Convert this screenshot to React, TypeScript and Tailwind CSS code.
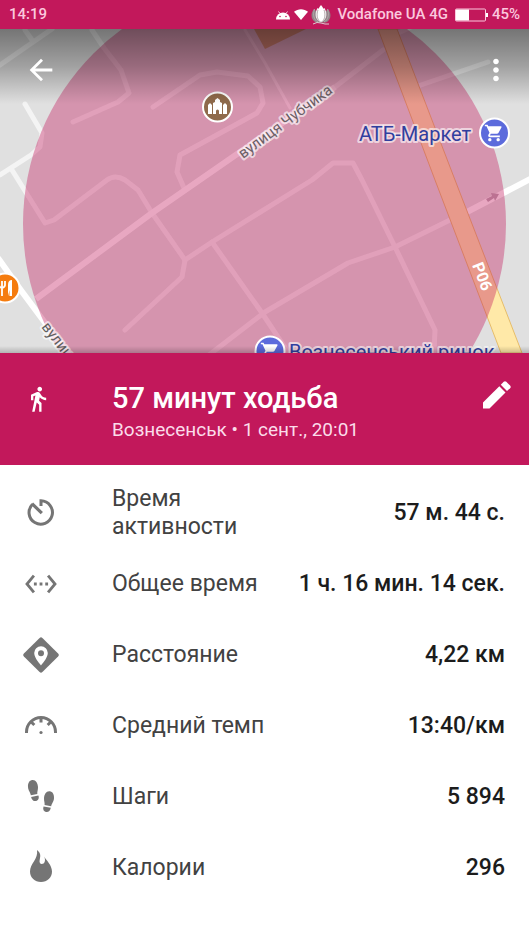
import { ReactNode } from "react";
import {
  MdArrowBack,
  MdDirectionsWalk,
  MdMoreVert,
  MdSettingsEthernet,
  MdShoppingCart,
} from "react-icons/md";

type Stat = {
  icon: ReactNode;
  label: string;
  value: string;
};

function PencilIcon() {
  return (
    <svg viewBox="0 0 28 28" className="size-7" fill="white">
      <path d="M0 27.500V21.500L16.300 5.200l6.200 6.200L6.500 27.500z" />
      <path d="M17.800 3.700L20.700.8q1.300-1.200 2.600 0l3.800 3.800q1.200 1.300 0 2.600L24 10z" />
    </svg>
  );
}

function TimerIcon() {
  return (
    <svg viewBox="0 0 36 36" className="size-9" fill="none" stroke="currentColor" strokeWidth="3">
      <path d="M9.500 9.200A11.700 11.700 0 1 0 18 5.800V11" />
      <path d="M9 8.600L18.800 18.200" strokeWidth="3.200" />
    </svg>
  );
}

function DistanceIcon() {
  return (
    <svg viewBox="0 0 36 36" className="size-9" fill="currentColor">
      <path d="M16.600.9a2 2 0 0 1 2.800 0l15.700 15.700a2 2 0 0 1 0 2.800L19.400 35.100a2 2 0 0 1-2.800 0L.9 19.400a2 2 0 0 1 0-2.800z" />
      <path
        fill="white"
        fillRule="evenodd"
        d="M18 9.300a6.800 6.800 0 0 0-6.800 6.800c0 5.200 6.800 12.300 6.800 12.300s6.800-7.100 6.800-12.300A6.800 6.800 0 0 0 18 9.300zm0 4a3 3 0 1 1 0 6 3 3 0 0 1 0-6z"
      />
    </svg>
  );
}

function PaceIcon() {
  return (
    <svg viewBox="0 0 36 36" className="size-9" fill="none" stroke="currentColor" strokeWidth="3">
      <path d="M3.500 25V24a14.500 14.500 0 0 1 29 0V25" />
      <path d="M18 9V14.500M8 13.700L11.300 17M28 13.700L24.700 17" />
      <circle cx="18" cy="24.500" r="1.600" fill="currentColor" stroke="none" />
    </svg>
  );
}

function StepsIcon() {
  return (
    <svg viewBox="0 0 36 36" className="size-9" fill="currentColor">
      <path d="M9.300 1C12.500.500 14.800 4 15 8c.100 2.800-.900 4.600-.700 7L7.800 16.200C7.600 13.600 5.300 12 5 8 4.800 4 6.300 1.400 9.300 1z" />
      <path d="M8.100 17.900L15.400 16.600c1 2.800-.200 5-2.400 5.400-2.400.400-4.300-1-4.900-4.100z" />
      <path d="M26.700 12.200c-3.200-.5-5.500 3-5.700 7-.1 2.800.9 4.300.6 6.900l6.600 1.200c.2-2.700 2.500-4.100 2.800-8.100.2-4-1.300-6.600-4.300-7z" />
      <path d="M20.500 27.500L27.800 28.800c-.5 3.200-2.500 4.600-4.900 4.200-2.200-.4-3.300-2.700-2.400-5.500z" />
    </svg>
  );
}

function FlameIcon() {
  return (
    <svg viewBox="0 0 36 36" className="size-9" fill="currentColor">
      <path d="M14 0C18 3 17.500 6 16.800 9.300c-.8 3.200.2 4.700 2 4.700 2.800 0 4.200-3.200 2.400-7.500 1.800 3.500 7.800 8.500 7.800 15C29 27.700 24.200 32 18 32S7 27.700 7 21.500C7 13.500 15.500 9 14 0z" />
    </svg>
  );
}

const stats: Stat[] = [
  { icon: <TimerIcon />, label: "Время активности", value: "57 м. 44 с." },
  { icon: <MdSettingsEthernet size={34} />, label: "Общее время", value: "1 ч. 16 мин. 14 сек." },
  { icon: <DistanceIcon />, label: "Расстояние", value: "4,22 км" },
  { icon: <PaceIcon />, label: "Средний темп", value: "13:40/км" },
  { icon: <StepsIcon />, label: "Шаги", value: "5 894" },
  { icon: <FlameIcon />, label: "Калории", value: "296" },
];

function StatusBar() {
  return (
    <div className="flex h-[29px] items-center justify-between bg-[#c2185b] px-[9px] text-[15px] font-medium text-[#fbc8de]">
      <span>14:19</span>
      <div className="flex items-center gap-[3px]">
        <svg viewBox="0 0 16 10" className="h-[10px] w-4" fill="white">
          <path d="M1 9.500a7 7 0 0 1 14 0z" />
          <path d="M3.500 1.500L5 3.500M12.500 1.500L11 3.500" stroke="white" strokeWidth=".8" />
          <circle cx="5" cy="6.500" r=".8" fill="#c2185b" />
          <circle cx="11" cy="6.500" r=".8" fill="#c2185b" />
        </svg>
        <svg viewBox="0 0 14 11" className="h-[11px] w-[14px]" fill="white">
          <path d="M0 2.800C4 -.6 10 -.6 14 2.800L7 11z" />
        </svg>
        <svg viewBox="0 0 20 20" className="size-5">
          <path d="M3 4C-1 9 0 15 5 17.500h10C20 15 21 9 17 4l-3 3H6z" fill="#928388" />
          <path d="M3.500 4C1.500 10 3 15 7 17M16.500 4C18.500 10 17 15 13 17" fill="none" stroke="#b9aeb1" strokeWidth=".8" />
          <path d="M6.500 3C3.500 8 4 14 8.500 16.500h3C16 14 16.500 8 13.500 3L10 5z" fill="#f3f0f1" />
          <path d="M10 0C5.500 5 5 13 9 16.500h2C15 13 14.500 5 10 0z" fill="white" />
          <path d="M7 5C5.500 9 6 14 8.500 16.200M13 5C14.500 9 14 14 11.500 16.200" fill="none" stroke="#8f8084" strokeWidth=".6" />
          <path d="M2 19Q6 16.500 10 18T18 19" fill="none" stroke="#d9cdd1" />
        </svg>
        <span className="ml-1">Vodafone UA 4G</span>
        <svg viewBox="0 0 34 14" className="ml-1 h-[14px] w-[34px]">
          <rect x=".5" y="1" width="30" height="12" rx="1" fill="none" stroke="#fbc8de" />
          <path d="M1 1.500h13v11H1z" fill="white" />
          <path d="M31 5h2v4h-2z" fill="white" />
        </svg>
        <span>45%</span>
      </div>
    </div>
  );
}

function MapView() {
  return (
    <svg
      viewBox="0 29 529 324"
      className="block w-full font-[Roboto,sans-serif]"
      role="img"
      aria-label="Карта"
    >
      <defs>
        <linearGradient id="topShade" x1="0" y1="0" x2="0" y2="1">
          <stop offset="0" stopColor="black" stopOpacity=".48" />
          <stop offset=".5" stopColor="black" stopOpacity=".28" />
          <stop offset="1" stopColor="black" stopOpacity="0" />
        </linearGradient>
        <linearGradient id="bottomShade" x1="0" y1="0" x2="0" y2="1">
          <stop offset="0" stopColor="black" stopOpacity="0" />
          <stop offset="1" stopColor="black" stopOpacity=".2" />
        </linearGradient>
      </defs>

      <path d="M0 29H529V353H0z" fill="#e0e0e0" />
      <path d="M254 29H306L265 49z" fill="#c8b070" />

      {/* side streets */}
      <g fill="none" stroke="#f4f4f4" strokeWidth="5" strokeLinecap="round" strokeLinejoin="round">
        <path d="M0 65L52 29M25 30L32 40" />
        <path d="M92 30L104 48 121 70 129 93 118 102 73 122" />
        <path d="M25 104L42 133 40 147 31 155 0 175" />
        <path d="M12 170L45 223 54 220 107 180Q115 174 125 180L138 190 152 213 185 260 182 277 125 330" />
        <path d="M153 107L200 75 217 72 248 76 260 87 263 103 257 113 180 155 177 172 184 188" />
        <path d="M245 30L265 63 290 108" strokeWidth="3" />
        <path d="M185 260L212 242 312 180 333 163H353L362 180 395 247 435 330 434 353" />
        <path d="M205 358L265 312 348 263 395 247 450 220M212 242L262 313 290 355" />
        <path d="M335 87L383 50M418 86L488 62M396 34L411 27" />
      </g>
      <g fill="none" stroke="white" strokeWidth="6" strokeLinejoin="round">
        <path d="M36 299L152 213 240 152 335 87" />
        <path d="M467 212L532 178" />
        <path d="M-2 258L20 289 43 320 70 356" />
      </g>
      <path d="M486 199l6-3-1-3 8 1-4 7-1-3-6 4z" fill="#b8aab4" />
      <path d="M378 29L435 180 501 353H522L455 180 397 29z" fill="#ffe9a8" stroke="#e6bd6a" />

      <circle cx="264.500" cy="224" r="241.500" fill="#c2185b" fillOpacity=".38" />

      {/* place labels */}
      <g stroke="white" strokeOpacity=".6" strokeWidth="4" strokeLinejoin="round" paintOrder="stroke">
        <text transform="translate(243 159) rotate(-36.500)" fontSize="15" fill="#6b5f66">
          вулиця Чубчика
        </text>
        <text transform="translate(41 327) rotate(52)" fontSize="15" fill="#5f5f5f">
          вулиця
        </text>
        <text x="359" y="141" fontSize="20" fill="#303f9f">
          АТБ-Маркет
        </text>
        <text x="289" y="359" fontSize="20" fill="#303f9f">
          Вознесенський ринок
        </text>
      </g>
      <text transform="translate(472 265) rotate(69)" fontSize="16" fontWeight="700" fill="white">
        Р06
      </text>

      {/* pins */}
      <g stroke="white" strokeWidth="2">
        <circle cx="217.500" cy="107" r="14.500" fill="#8f6a4b" />
        <circle cx="494.500" cy="133" r="14.500" fill="#5c6bdc" />
        <circle cx="270" cy="351" r="14.500" fill="#5c6bdc" />
        <circle cx="5" cy="288" r="14.500" fill="#f57c0f" />
      </g>
      <path
        d="M208 114V105l2-2 2 2v9zM223 114V105l2-2 2 2v9zM213 114V103l2-1v-2l2.500-2 2.500 2v2l2 1v11h-3v-3a1.500 1.500 0 0 0-3 0v3z"
        fill="white"
      />
      <MdShoppingCart x="484" y="123" size={20} color="white" />
      <MdShoppingCart x="260" y="341" size={20} color="white" />
      <path d="M8 296V285q0-5 4-5v16h-2.500v-6z" fill="white" />
      <path d="M-1 281v4q0 2 3 3 3-1 3-3v-4M2 281v15" fill="none" stroke="white" strokeWidth="1.800" />

      <path d="M0 29H529V104H0z" fill="url(#topShade)" />
      <path d="M0 346H529V353H0z" fill="url(#bottomShade)" />
    </svg>
  );
}

export default function App() {
  return (
    <main className="min-h-screen bg-white font-[Roboto,sans-serif]">
      <StatusBar />

      <div className="relative">
        <MapView />
        <div className="absolute inset-x-0 top-0 flex items-center justify-between px-4 pt-6 text-white">
          <button type="button" aria-label="Назад" className="ml-2">
            <MdArrowBack size={34} />
          </button>
          <button type="button" aria-label="Ещё">
            <MdMoreVert size={34} />
          </button>
        </div>
      </div>

      <header className="flex h-28 items-start bg-[#c2185b] px-6 pt-7 text-white">
        <MdDirectionsWalk size={28} className="mt-1 shrink-0" />
        <div className="ml-[60px] flex-1">
          <h1 className="text-[29px] leading-[34px] font-medium">57 минут ходьба</h1>
          <p className="text-[19px] leading-[30px] text-[#fbdcea]">Вознесенськ • 1 сент., 20:01</p>
        </div>
        <button type="button" aria-label="Изменить" className="-mr-1.5">
          <PencilIcon />
        </button>
      </header>

      <dl className="pt-3 pr-6 pl-[23px] text-[23px] leading-7">
        {stats.map((stat) => (
          <div key={stat.label} className="flex h-[71px] items-center">
            <dt className="flex items-center text-[#424242]">
              <span className="flex w-9 justify-center text-[#757575]">{stat.icon}</span>
              <span className="ml-[53px] w-40">{stat.label}</span>
            </dt>
            <dd className="flex-1 text-right font-medium whitespace-nowrap text-[#1c1c1c]">
              {stat.value}
            </dd>
          </div>
        ))}
      </dl>
    </main>
  );
}
